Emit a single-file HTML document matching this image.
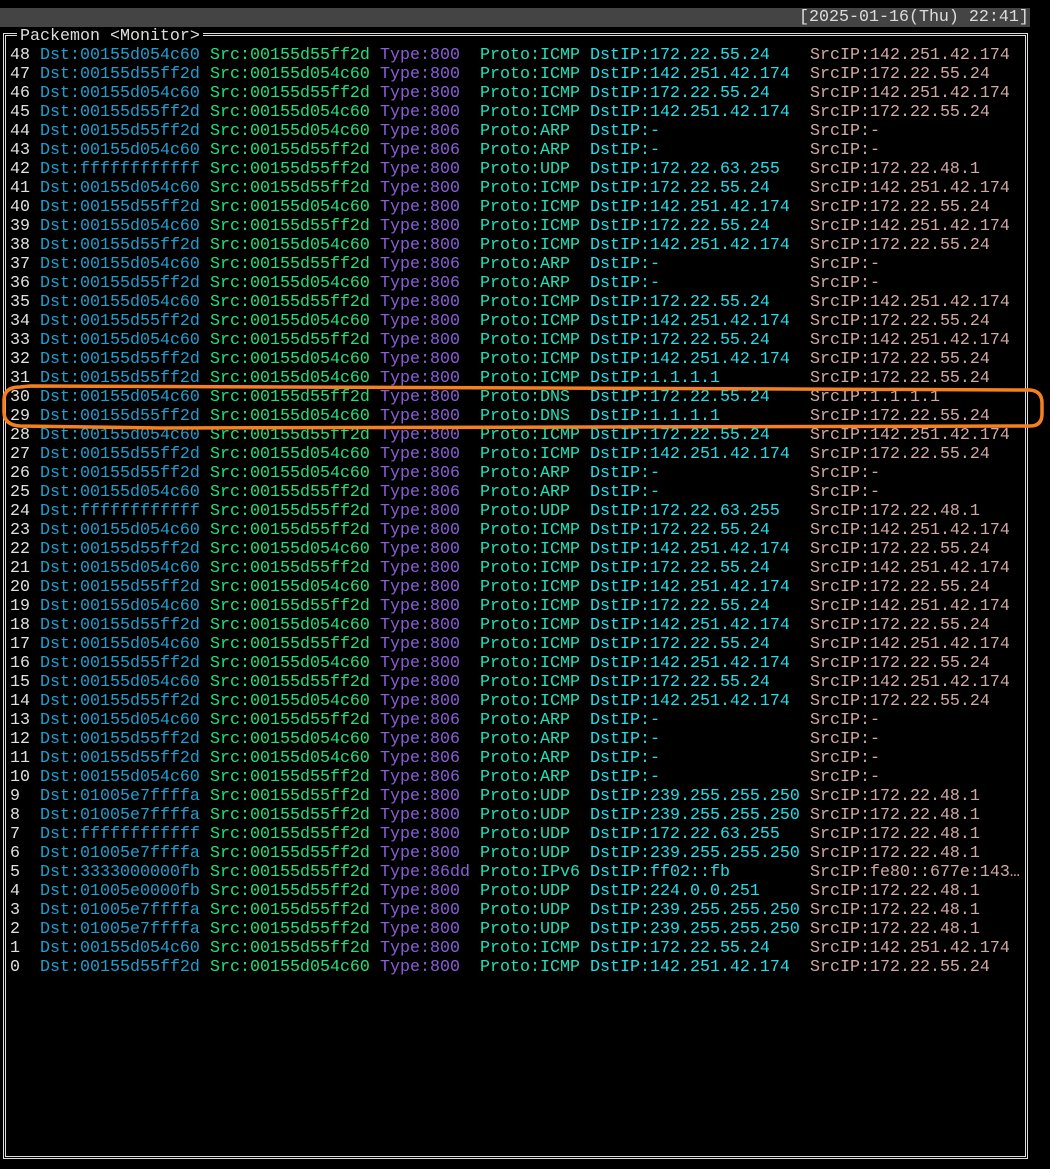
<!DOCTYPE html>
<html><head><meta charset="utf-8"><style>
html,body{margin:0;padding:0;background:#000;width:1050px;height:1169px;overflow:hidden;position:relative}
*{font-family:"Liberation Mono","DejaVu Sans Mono",monospace}
.bar{position:absolute;left:0;top:8px;width:1030px;height:19px;background:#444}
.date{position:absolute;left:799px;top:8px;height:19px;line-height:19px;font-size:16.67px;color:#ddd;white-space:pre}
.frame{position:absolute;left:3px;top:33px;width:1019px;height:1120px;border:3px double #ddd}
.title{position:absolute;left:17px;top:27px;height:19px;line-height:19px;font-size:16.67px;color:#ddd;background:#000;padding:0 3px;white-space:pre}
.rows{position:absolute;left:10px;top:46px}
.r{height:19px;line-height:19px;font-size:16.67px;white-space:pre;position:relative}
.r span{position:absolute;top:0}
.n{left:0;color:#e0e0e0}
.d{left:30px;color:#1e9fd0}
.s{left:200px;color:#1fe07a}
.t{left:370px;color:#8a5ed8}
.p{left:470px;color:#1fe0b8}
.i{left:580px;color:#22dde8}
.o{left:800px;color:#d0a8a5}
</style></head><body>
<div class="bar"></div>
<div class="date">[2025-01-16(Thu) 22:41]</div>
<div class="frame"></div>
<div class="title">Packemon &lt;Monitor&gt;</div>
<div class="rows">
<div class="r"><span class="n">48</span><span class="d">Dst:00155d054c60</span><span class="s">Src:00155d55ff2d</span><span class="t">Type:800</span><span class="p">Proto:ICMP</span><span class="i">DstIP:172.22.55.24</span><span class="o">SrcIP:142.251.42.174</span></div>
<div class="r"><span class="n">47</span><span class="d">Dst:00155d55ff2d</span><span class="s">Src:00155d054c60</span><span class="t">Type:800</span><span class="p">Proto:ICMP</span><span class="i">DstIP:142.251.42.174</span><span class="o">SrcIP:172.22.55.24</span></div>
<div class="r"><span class="n">46</span><span class="d">Dst:00155d054c60</span><span class="s">Src:00155d55ff2d</span><span class="t">Type:800</span><span class="p">Proto:ICMP</span><span class="i">DstIP:172.22.55.24</span><span class="o">SrcIP:142.251.42.174</span></div>
<div class="r"><span class="n">45</span><span class="d">Dst:00155d55ff2d</span><span class="s">Src:00155d054c60</span><span class="t">Type:800</span><span class="p">Proto:ICMP</span><span class="i">DstIP:142.251.42.174</span><span class="o">SrcIP:172.22.55.24</span></div>
<div class="r"><span class="n">44</span><span class="d">Dst:00155d55ff2d</span><span class="s">Src:00155d054c60</span><span class="t">Type:806</span><span class="p">Proto:ARP</span><span class="i">DstIP:-</span><span class="o">SrcIP:-</span></div>
<div class="r"><span class="n">43</span><span class="d">Dst:00155d054c60</span><span class="s">Src:00155d55ff2d</span><span class="t">Type:806</span><span class="p">Proto:ARP</span><span class="i">DstIP:-</span><span class="o">SrcIP:-</span></div>
<div class="r"><span class="n">42</span><span class="d">Dst:ffffffffffff</span><span class="s">Src:00155d55ff2d</span><span class="t">Type:800</span><span class="p">Proto:UDP</span><span class="i">DstIP:172.22.63.255</span><span class="o">SrcIP:172.22.48.1</span></div>
<div class="r"><span class="n">41</span><span class="d">Dst:00155d054c60</span><span class="s">Src:00155d55ff2d</span><span class="t">Type:800</span><span class="p">Proto:ICMP</span><span class="i">DstIP:172.22.55.24</span><span class="o">SrcIP:142.251.42.174</span></div>
<div class="r"><span class="n">40</span><span class="d">Dst:00155d55ff2d</span><span class="s">Src:00155d054c60</span><span class="t">Type:800</span><span class="p">Proto:ICMP</span><span class="i">DstIP:142.251.42.174</span><span class="o">SrcIP:172.22.55.24</span></div>
<div class="r"><span class="n">39</span><span class="d">Dst:00155d054c60</span><span class="s">Src:00155d55ff2d</span><span class="t">Type:800</span><span class="p">Proto:ICMP</span><span class="i">DstIP:172.22.55.24</span><span class="o">SrcIP:142.251.42.174</span></div>
<div class="r"><span class="n">38</span><span class="d">Dst:00155d55ff2d</span><span class="s">Src:00155d054c60</span><span class="t">Type:800</span><span class="p">Proto:ICMP</span><span class="i">DstIP:142.251.42.174</span><span class="o">SrcIP:172.22.55.24</span></div>
<div class="r"><span class="n">37</span><span class="d">Dst:00155d054c60</span><span class="s">Src:00155d55ff2d</span><span class="t">Type:806</span><span class="p">Proto:ARP</span><span class="i">DstIP:-</span><span class="o">SrcIP:-</span></div>
<div class="r"><span class="n">36</span><span class="d">Dst:00155d55ff2d</span><span class="s">Src:00155d054c60</span><span class="t">Type:806</span><span class="p">Proto:ARP</span><span class="i">DstIP:-</span><span class="o">SrcIP:-</span></div>
<div class="r"><span class="n">35</span><span class="d">Dst:00155d054c60</span><span class="s">Src:00155d55ff2d</span><span class="t">Type:800</span><span class="p">Proto:ICMP</span><span class="i">DstIP:172.22.55.24</span><span class="o">SrcIP:142.251.42.174</span></div>
<div class="r"><span class="n">34</span><span class="d">Dst:00155d55ff2d</span><span class="s">Src:00155d054c60</span><span class="t">Type:800</span><span class="p">Proto:ICMP</span><span class="i">DstIP:142.251.42.174</span><span class="o">SrcIP:172.22.55.24</span></div>
<div class="r"><span class="n">33</span><span class="d">Dst:00155d054c60</span><span class="s">Src:00155d55ff2d</span><span class="t">Type:800</span><span class="p">Proto:ICMP</span><span class="i">DstIP:172.22.55.24</span><span class="o">SrcIP:142.251.42.174</span></div>
<div class="r"><span class="n">32</span><span class="d">Dst:00155d55ff2d</span><span class="s">Src:00155d054c60</span><span class="t">Type:800</span><span class="p">Proto:ICMP</span><span class="i">DstIP:142.251.42.174</span><span class="o">SrcIP:172.22.55.24</span></div>
<div class="r"><span class="n">31</span><span class="d">Dst:00155d55ff2d</span><span class="s">Src:00155d054c60</span><span class="t">Type:800</span><span class="p">Proto:ICMP</span><span class="i">DstIP:1.1.1.1</span><span class="o">SrcIP:172.22.55.24</span></div>
<div class="r"><span class="n">30</span><span class="d">Dst:00155d054c60</span><span class="s">Src:00155d55ff2d</span><span class="t">Type:800</span><span class="p">Proto:DNS</span><span class="i">DstIP:172.22.55.24</span><span class="o">SrcIP:1.1.1.1</span></div>
<div class="r"><span class="n">29</span><span class="d">Dst:00155d55ff2d</span><span class="s">Src:00155d054c60</span><span class="t">Type:800</span><span class="p">Proto:DNS</span><span class="i">DstIP:1.1.1.1</span><span class="o">SrcIP:172.22.55.24</span></div>
<div class="r"><span class="n">28</span><span class="d">Dst:00155d054c60</span><span class="s">Src:00155d55ff2d</span><span class="t">Type:800</span><span class="p">Proto:ICMP</span><span class="i">DstIP:172.22.55.24</span><span class="o">SrcIP:142.251.42.174</span></div>
<div class="r"><span class="n">27</span><span class="d">Dst:00155d55ff2d</span><span class="s">Src:00155d054c60</span><span class="t">Type:800</span><span class="p">Proto:ICMP</span><span class="i">DstIP:142.251.42.174</span><span class="o">SrcIP:172.22.55.24</span></div>
<div class="r"><span class="n">26</span><span class="d">Dst:00155d55ff2d</span><span class="s">Src:00155d054c60</span><span class="t">Type:806</span><span class="p">Proto:ARP</span><span class="i">DstIP:-</span><span class="o">SrcIP:-</span></div>
<div class="r"><span class="n">25</span><span class="d">Dst:00155d054c60</span><span class="s">Src:00155d55ff2d</span><span class="t">Type:806</span><span class="p">Proto:ARP</span><span class="i">DstIP:-</span><span class="o">SrcIP:-</span></div>
<div class="r"><span class="n">24</span><span class="d">Dst:ffffffffffff</span><span class="s">Src:00155d55ff2d</span><span class="t">Type:800</span><span class="p">Proto:UDP</span><span class="i">DstIP:172.22.63.255</span><span class="o">SrcIP:172.22.48.1</span></div>
<div class="r"><span class="n">23</span><span class="d">Dst:00155d054c60</span><span class="s">Src:00155d55ff2d</span><span class="t">Type:800</span><span class="p">Proto:ICMP</span><span class="i">DstIP:172.22.55.24</span><span class="o">SrcIP:142.251.42.174</span></div>
<div class="r"><span class="n">22</span><span class="d">Dst:00155d55ff2d</span><span class="s">Src:00155d054c60</span><span class="t">Type:800</span><span class="p">Proto:ICMP</span><span class="i">DstIP:142.251.42.174</span><span class="o">SrcIP:172.22.55.24</span></div>
<div class="r"><span class="n">21</span><span class="d">Dst:00155d054c60</span><span class="s">Src:00155d55ff2d</span><span class="t">Type:800</span><span class="p">Proto:ICMP</span><span class="i">DstIP:172.22.55.24</span><span class="o">SrcIP:142.251.42.174</span></div>
<div class="r"><span class="n">20</span><span class="d">Dst:00155d55ff2d</span><span class="s">Src:00155d054c60</span><span class="t">Type:800</span><span class="p">Proto:ICMP</span><span class="i">DstIP:142.251.42.174</span><span class="o">SrcIP:172.22.55.24</span></div>
<div class="r"><span class="n">19</span><span class="d">Dst:00155d054c60</span><span class="s">Src:00155d55ff2d</span><span class="t">Type:800</span><span class="p">Proto:ICMP</span><span class="i">DstIP:172.22.55.24</span><span class="o">SrcIP:142.251.42.174</span></div>
<div class="r"><span class="n">18</span><span class="d">Dst:00155d55ff2d</span><span class="s">Src:00155d054c60</span><span class="t">Type:800</span><span class="p">Proto:ICMP</span><span class="i">DstIP:142.251.42.174</span><span class="o">SrcIP:172.22.55.24</span></div>
<div class="r"><span class="n">17</span><span class="d">Dst:00155d054c60</span><span class="s">Src:00155d55ff2d</span><span class="t">Type:800</span><span class="p">Proto:ICMP</span><span class="i">DstIP:172.22.55.24</span><span class="o">SrcIP:142.251.42.174</span></div>
<div class="r"><span class="n">16</span><span class="d">Dst:00155d55ff2d</span><span class="s">Src:00155d054c60</span><span class="t">Type:800</span><span class="p">Proto:ICMP</span><span class="i">DstIP:142.251.42.174</span><span class="o">SrcIP:172.22.55.24</span></div>
<div class="r"><span class="n">15</span><span class="d">Dst:00155d054c60</span><span class="s">Src:00155d55ff2d</span><span class="t">Type:800</span><span class="p">Proto:ICMP</span><span class="i">DstIP:172.22.55.24</span><span class="o">SrcIP:142.251.42.174</span></div>
<div class="r"><span class="n">14</span><span class="d">Dst:00155d55ff2d</span><span class="s">Src:00155d054c60</span><span class="t">Type:800</span><span class="p">Proto:ICMP</span><span class="i">DstIP:142.251.42.174</span><span class="o">SrcIP:172.22.55.24</span></div>
<div class="r"><span class="n">13</span><span class="d">Dst:00155d054c60</span><span class="s">Src:00155d55ff2d</span><span class="t">Type:806</span><span class="p">Proto:ARP</span><span class="i">DstIP:-</span><span class="o">SrcIP:-</span></div>
<div class="r"><span class="n">12</span><span class="d">Dst:00155d55ff2d</span><span class="s">Src:00155d054c60</span><span class="t">Type:806</span><span class="p">Proto:ARP</span><span class="i">DstIP:-</span><span class="o">SrcIP:-</span></div>
<div class="r"><span class="n">11</span><span class="d">Dst:00155d55ff2d</span><span class="s">Src:00155d054c60</span><span class="t">Type:806</span><span class="p">Proto:ARP</span><span class="i">DstIP:-</span><span class="o">SrcIP:-</span></div>
<div class="r"><span class="n">10</span><span class="d">Dst:00155d054c60</span><span class="s">Src:00155d55ff2d</span><span class="t">Type:806</span><span class="p">Proto:ARP</span><span class="i">DstIP:-</span><span class="o">SrcIP:-</span></div>
<div class="r"><span class="n">9</span><span class="d">Dst:01005e7ffffa</span><span class="s">Src:00155d55ff2d</span><span class="t">Type:800</span><span class="p">Proto:UDP</span><span class="i">DstIP:239.255.255.250</span><span class="o">SrcIP:172.22.48.1</span></div>
<div class="r"><span class="n">8</span><span class="d">Dst:01005e7ffffa</span><span class="s">Src:00155d55ff2d</span><span class="t">Type:800</span><span class="p">Proto:UDP</span><span class="i">DstIP:239.255.255.250</span><span class="o">SrcIP:172.22.48.1</span></div>
<div class="r"><span class="n">7</span><span class="d">Dst:ffffffffffff</span><span class="s">Src:00155d55ff2d</span><span class="t">Type:800</span><span class="p">Proto:UDP</span><span class="i">DstIP:172.22.63.255</span><span class="o">SrcIP:172.22.48.1</span></div>
<div class="r"><span class="n">6</span><span class="d">Dst:01005e7ffffa</span><span class="s">Src:00155d55ff2d</span><span class="t">Type:800</span><span class="p">Proto:UDP</span><span class="i">DstIP:239.255.255.250</span><span class="o">SrcIP:172.22.48.1</span></div>
<div class="r"><span class="n">5</span><span class="d">Dst:3333000000fb</span><span class="s">Src:00155d55ff2d</span><span class="t">Type:86dd</span><span class="p">Proto:IPv6</span><span class="i">DstIP:ff02::fb</span><span class="o">SrcIP:fe80::677e:143…</span></div>
<div class="r"><span class="n">4</span><span class="d">Dst:01005e0000fb</span><span class="s">Src:00155d55ff2d</span><span class="t">Type:800</span><span class="p">Proto:UDP</span><span class="i">DstIP:224.0.0.251</span><span class="o">SrcIP:172.22.48.1</span></div>
<div class="r"><span class="n">3</span><span class="d">Dst:01005e7ffffa</span><span class="s">Src:00155d55ff2d</span><span class="t">Type:800</span><span class="p">Proto:UDP</span><span class="i">DstIP:239.255.255.250</span><span class="o">SrcIP:172.22.48.1</span></div>
<div class="r"><span class="n">2</span><span class="d">Dst:01005e7ffffa</span><span class="s">Src:00155d55ff2d</span><span class="t">Type:800</span><span class="p">Proto:UDP</span><span class="i">DstIP:239.255.255.250</span><span class="o">SrcIP:172.22.48.1</span></div>
<div class="r"><span class="n">1</span><span class="d">Dst:00155d054c60</span><span class="s">Src:00155d55ff2d</span><span class="t">Type:800</span><span class="p">Proto:ICMP</span><span class="i">DstIP:172.22.55.24</span><span class="o">SrcIP:142.251.42.174</span></div>
<div class="r"><span class="n">0</span><span class="d">Dst:00155d55ff2d</span><span class="s">Src:00155d054c60</span><span class="t">Type:800</span><span class="p">Proto:ICMP</span><span class="i">DstIP:142.251.42.174</span><span class="o">SrcIP:172.22.55.24</span></div>
</div>
<svg style="position:absolute;left:0;top:0" width="1050" height="1169">
<path d="M30 386 L1030 390 Q1042 391 1042 403 L1042 414 Q1042 426 1030 426 L160 428 L20 426 Q4 425 4 412 L4 400 Q4 387 20 387 Z" fill="none" stroke="#f5801f" stroke-width="3.5"/>
</svg>
</body></html>
